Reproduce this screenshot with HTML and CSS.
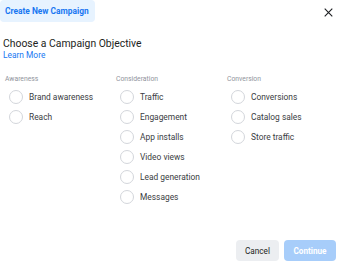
FILE: index.html
```html
<!DOCTYPE html>
<html>
<head>
<meta charset="utf-8">
<link rel="stylesheet" href="styles.css">
</head>
<body>
<div class="dialog">
  <div class="header">
    <div class="badge">Create New Campaign</div>
    <button class="close" aria-label="Close">
      <svg width="9" height="9" viewBox="0 0 9 9"><path d="M0.7 0.7 L8.3 8.3 M8.3 0.7 L0.7 8.3" stroke="#1c1e21" stroke-width="1.1" fill="none"/></svg>
    </button>
  </div>
  <h1 class="title">Choose a Campaign Objective</h1>
  <a class="learn">Learn More</a>
  <div class="columns">
    <div class="col">
      <div class="label">Awareness</div>
      <div class="opt"><span class="radio"></span>Brand awareness</div>
      <div class="opt"><span class="radio"></span>Reach</div>
    </div>
    <div class="col">
      <div class="label">Consideration</div>
      <div class="opt"><span class="radio"></span>Traffic</div>
      <div class="opt"><span class="radio"></span>Engagement</div>
      <div class="opt"><span class="radio"></span>App installs</div>
      <div class="opt"><span class="radio"></span>Video views</div>
      <div class="opt"><span class="radio"></span>Lead generation</div>
      <div class="opt"><span class="radio"></span>Messages</div>
    </div>
    <div class="col">
      <div class="label">Conversion</div>
      <div class="opt"><span class="radio"></span>Conversions</div>
      <div class="opt"><span class="radio"></span>Catalog sales</div>
      <div class="opt"><span class="radio"></span>Store traffic</div>
    </div>
  </div>
  <div class="footer">
    <button class="btn cancel">Cancel</button>
    <button class="btn continue">Continue</button>
  </div>
</div>
</body>
</html>
```
FILE: styles.css
```css
html, body {
  margin: 0;
  padding: 0;
  background: #fff;
}
body {
  font-family: Roboto, "Liberation Sans", sans-serif;
  color: #1c1e21;
}
.dialog {
  height: 265px;
  display: flex;
  flex-direction: column;
  box-sizing: border-box;
}
.header {
  display: flex;
  justify-content: space-between;
  align-items: flex-start;
}
.badge {
  height: 22px;
  padding: 0 6px 0 5px;
  background: #e7f3ff;
  color: #1877f2;
  font-weight: 700;
  font-size: 8.4px;
  line-height: 22px;
  white-space: nowrap;
  border-radius: 4px;
}
.close {
  border: 0;
  background: none;
  padding: 0;
  margin: 8px 6px 0 0;
  width: 9px;
  height: 9px;
  display: flex;
}
.title {
  margin: 15px 0 0 3px;
  font-size: 10.4px;
  line-height: 13px;
  font-weight: 400;
  color: #1c1e21;
}
.learn {
  margin-left: 3px;
  font-size: 8.4px;
  line-height: 11px;
  color: #1877f2;
}
.columns {
  display: grid;
  grid-template-columns: 111px 111px 111px;
  margin: 14px 0 0 5px;
}
.label {
  font-size: 6.8px;
  line-height: 9px;
  color: #90949c;
  margin-bottom: 3px;
}
.opt {
  display: flex;
  align-items: center;
  height: 20px;
  padding-left: 4px;
  font-size: 8.4px;
  color: #3a3d42;
}
.radio {
  width: 14px;
  height: 14px;
  box-sizing: border-box;
  border: 1px solid #d3d6db;
  border-radius: 50%;
  margin-right: 6px;
  flex: none;
}
.footer {
  margin-top: auto;
  display: flex;
  justify-content: flex-end;
  gap: 5px;
  padding: 0 3px 4px 0;
}
.btn {
  border: 0;
  height: 21px;
  border-radius: 4px;
  font-family: Roboto, "Liberation Sans", sans-serif;
  font-size: 8.2px;
  padding: 0;
}
.cancel {
  width: 43px;
  background: #eceef1;
  color: #1c1e21;
  font-weight: 400;
}
.continue {
  width: 52px;
  background: #a7cdfa;
  color: #fff;
  font-weight: 700;
}
```
